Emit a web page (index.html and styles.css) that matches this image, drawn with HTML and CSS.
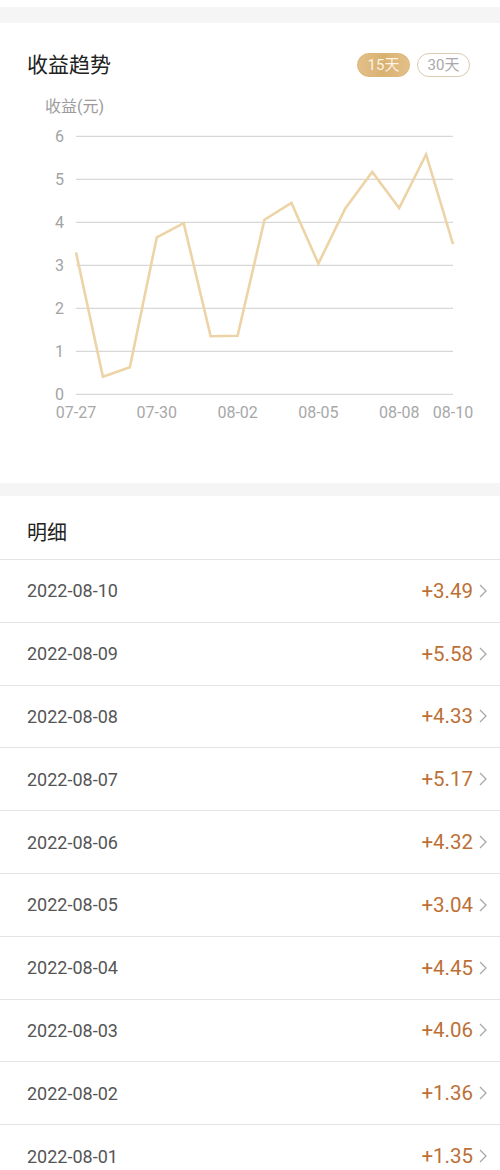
FILE: index.html
```html
<!DOCTYPE html>
<html lang="zh">
<head>
<meta charset="utf-8">
<link rel="stylesheet" href="styles.css">
</head>
<body>
<div class="page">
  <div class="top-white"></div>
  <div class="band"></div>
  <section class="card">
    <div class="card-head">
      <h2 class="title">收益趋势</h2>
      <div class="pills">
        <span class="pill pill-active">15天</span>
        <span class="pill">30天</span>
      </div>
    </div>
    <svg class="chart" width="500" height="406" viewBox="0 0 500 406">
      <text class="unit" x="45" y="35">收益(元)</text>
      <g class="grid">
        <line x1="76" y1="59.3" x2="453" y2="59.3"/>
        <line x1="76" y1="102.3" x2="453" y2="102.3"/>
        <line x1="76" y1="145.3" x2="453" y2="145.3"/>
        <line x1="76" y1="188.3" x2="453" y2="188.3"/>
        <line x1="76" y1="231.3" x2="453" y2="231.3"/>
        <line x1="76" y1="274.3" x2="453" y2="274.3"/>
        <line x1="76" y1="317.3" x2="453" y2="317.3"/>
      </g>
      <g class="ylab">
        <text x="59.5" y="65">6</text>
        <text x="59.5" y="108">5</text>
        <text x="59.5" y="151">4</text>
        <text x="59.5" y="194">3</text>
        <text x="59.5" y="237">2</text>
        <text x="59.5" y="280">1</text>
        <text x="59.5" y="323">0</text>
      </g>
      <g class="xlab">
        <text x="76" y="341">07-27</text>
        <text x="156.8" y="341">07-30</text>
        <text x="237.6" y="341">08-02</text>
        <text x="318.4" y="341">08-05</text>
        <text x="399.2" y="341">08-08</text>
        <text x="453" y="341">08-10</text>
      </g>
      <polyline class="line" points="76,175.4 102.93,299.7 129.86,290.2 156.79,160.4 183.72,146.2 210.65,259.2 237.58,258.8 264.51,142.7 291.44,126 318.37,186.6 345.3,131.5 372.23,95 399.16,131.1 426.09,77.4 453.02,167.2"/>
    </svg>
  </section>
  <div class="band band-2"></div>
  <section class="detail">
    <h2 class="detail-title">明细</h2>
    <ul class="rows">
      <li class="row"><span class="date">2022-08-10</span><span class="amt">+3.49</span><svg class="chev" width="8" height="14" viewBox="0 0 8 14"><polyline points="1,1 7,7 1,13"/></svg></li>
      <li class="row"><span class="date">2022-08-09</span><span class="amt">+5.58</span><svg class="chev" width="8" height="14" viewBox="0 0 8 14"><polyline points="1,1 7,7 1,13"/></svg></li>
      <li class="row"><span class="date">2022-08-08</span><span class="amt">+4.33</span><svg class="chev" width="8" height="14" viewBox="0 0 8 14"><polyline points="1,1 7,7 1,13"/></svg></li>
      <li class="row"><span class="date">2022-08-07</span><span class="amt">+5.17</span><svg class="chev" width="8" height="14" viewBox="0 0 8 14"><polyline points="1,1 7,7 1,13"/></svg></li>
      <li class="row"><span class="date">2022-08-06</span><span class="amt">+4.32</span><svg class="chev" width="8" height="14" viewBox="0 0 8 14"><polyline points="1,1 7,7 1,13"/></svg></li>
      <li class="row"><span class="date">2022-08-05</span><span class="amt">+3.04</span><svg class="chev" width="8" height="14" viewBox="0 0 8 14"><polyline points="1,1 7,7 1,13"/></svg></li>
      <li class="row"><span class="date">2022-08-04</span><span class="amt">+4.45</span><svg class="chev" width="8" height="14" viewBox="0 0 8 14"><polyline points="1,1 7,7 1,13"/></svg></li>
      <li class="row"><span class="date">2022-08-03</span><span class="amt">+4.06</span><svg class="chev" width="8" height="14" viewBox="0 0 8 14"><polyline points="1,1 7,7 1,13"/></svg></li>
      <li class="row"><span class="date">2022-08-02</span><span class="amt">+1.36</span><svg class="chev" width="8" height="14" viewBox="0 0 8 14"><polyline points="1,1 7,7 1,13"/></svg></li>
      <li class="row"><span class="date">2022-08-01</span><span class="amt">+1.35</span><svg class="chev" width="8" height="14" viewBox="0 0 8 14"><polyline points="1,1 7,7 1,13"/></svg></li>
    </ul>
  </section>
</div>
</body>
</html>
```
FILE: styles.css
```css
* { box-sizing: border-box; }
html, body {
  margin: 0;
  padding: 0;
  background: #ffffff;
}
body {
  font-family: Roboto, "Noto Sans CJK SC", "Noto Sans", sans-serif;
  color: #222;
}
.page {
  width: 500px;
  height: 1170px;
  overflow: hidden;
}
.top-white { height: 7px; background: #fff; }
.band { height: 16px; background: #f5f5f5; }
.band-2 { height: 13px; }
.card {
  background: #fff;
  height: 460px;
  display: flex;
  flex-direction: column;
}
.card-head {
  display: flex;
  align-items: center;
  justify-content: space-between;
  padding: 30px 30px 0 27px;
  height: 54px;
}
.title {
  margin: 0;
  font-size: 21px;
  font-weight: 400;
  line-height: 24px;
  color: #222;
}
.pills {
  display: flex;
  gap: 7px;
}
.pill {
  width: 53px;
  height: 24px;
  border-radius: 12px;
  border: 1.5px solid #d9ccae;
  color: #a9a9a9;
  font-size: 15px;
  display: flex;
  align-items: center;
  justify-content: center;
  line-height: 1;
}
.pill-active {
  border-color: #dcb679;
  background: linear-gradient(90deg, #e3c08a 0%, #d9b171 50%, #e3c08a 100%);
  color: #fbf3e4;
}
.chart {
  display: block;
  flex: none;
}
.unit {
  font-size: 16px;
  fill: #9c9c9c;
}
.grid line {
  stroke: #d8d8d8;
  stroke-width: 1.2;
}
.ylab text {
  font-size: 16px;
  fill: #a3a3a3;
  text-anchor: middle;
}
.xlab text {
  font-size: 16px;
  fill: #a8a8a8;
  text-anchor: middle;
}
.line {
  fill: none;
  stroke: #ecd4a6;
  stroke-width: 2.6;
  stroke-linejoin: miter;
}
.detail { background: #fff; }
.detail-title {
  margin: 0;
  padding: 25px 27px 0;
  height: 63px;
  font-size: 20px;
  font-weight: 400;
  line-height: 24px;
  color: #222;
}
.rows {
  list-style: none;
  margin: 0;
  padding: 0;
}
.row {
  height: 62.8px;
  border-top: 1.5px solid #e4e4e4;
  display: flex;
  align-items: center;
  padding: 0 13px 0 27px;
}
.date {
  flex: 1;
  font-size: 18px;
  color: #555;
}
.amt {
  font-size: 20.5px;
  color: #bd7036;
}
.chev {
  margin-left: 6px;
  display: block;
}
.chev polyline {
  fill: none;
  stroke: #a8a8a8;
  stroke-width: 1.3;
}
```
